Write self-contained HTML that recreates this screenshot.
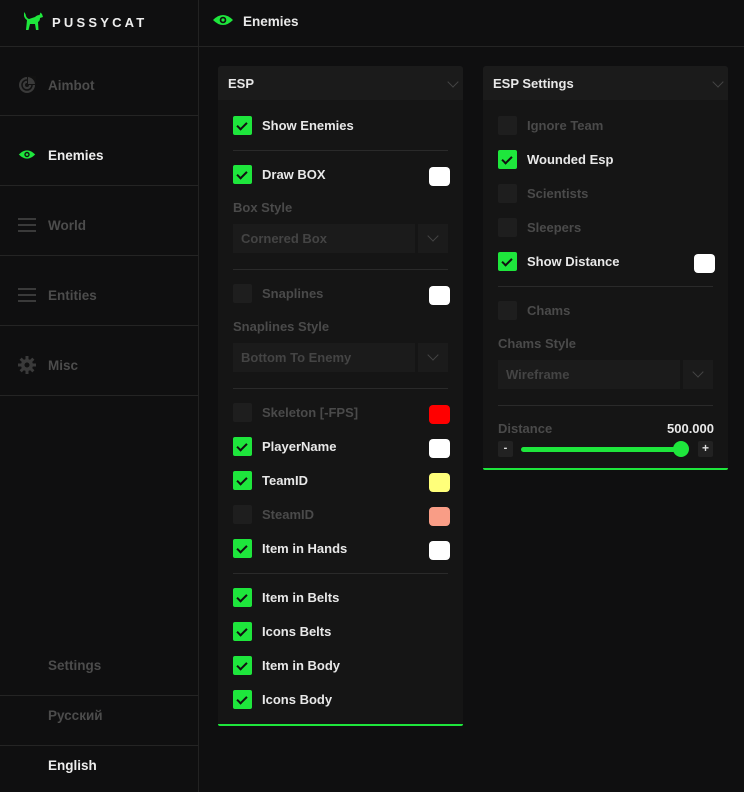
<!DOCTYPE html>
<html><head><meta charset="utf-8"><style>
*{margin:0;padding:0;box-sizing:border-box}
body{width:744px;height:792px;background:#0f0f10;font-family:"Liberation Sans","DejaVu Sans",sans-serif;font-weight:bold;font-size:13px;color:#e8e8e8;position:relative;overflow:hidden}
.a{position:absolute}
.sb{left:0;top:0;width:199px;height:792px;border-right:1px solid #222}
.hl{height:1px;background:#242424}
.nav{left:48px;font-size:13.5px;color:#4c4c4c}
.panel{background:#151515;border-radius:3px}
.gl{height:2px;background:#1ee63c;border-radius:0 0 3px 3px}
.ph{background:#1b1b1b;height:34px;border-radius:3px 3px 0 0}
.cb{width:19px;height:19px;border-radius:2px;background:#1ee63c}
.cb.off{background:#1e1e1e}
.cb:not(.off)::after{content:"";position:absolute;left:6px;top:4px;width:4px;height:8px;border:solid #111;border-width:0 2px 2px 0;transform:rotate(45deg)}
.lbl{font-size:13px;margin-top:1px}
.dis{color:#4a4a4a}
.sw{width:21px;height:19px;border-radius:4px}
.dv{height:1px;background:#2a2a2a}
.cmb{height:29px;background:#1b1b1b;color:#444;padding:7px 8px;font-size:13px}
.chev{width:8px;height:8px;border:solid #555;border-width:0 1.5px 1.5px 0;transform:rotate(45deg)}
</style></head><body>
<div class="a sb"></div>
<!-- logo -->
<svg class="a" style="left:22px;top:11px" width="22" height="20" viewBox="0 0 22 20"><path d="M2 1 L2 5 Q3 8 5 9 L4 19 H6.5 L8 13 H13 L14 19 H16.5 L16 11 Q18 10 18 7 L21 6 L20 3 L18.5 1.5 L17.5 4 Q15 4 13 6 L7 8 Q4 7 3.5 3 Z" fill="#1ee63c"/></svg>
<div class="a" style="left:52px;top:15px;font-size:13px;letter-spacing:3.2px;color:#eee">PUSSYCAT</div>
<div class="a hl" style="left:0;top:46px;width:744px"></div>
<!-- top bar eye -->
<svg class="a" style="left:212px;top:13px" width="22" height="14" viewBox="0 0 22 14"><path d="M1 7 Q11 -3 21 7 Q11 17 1 7Z" fill="#1ee63c"/><circle cx="11" cy="7" r="3.3" fill="#0f0f10"/><circle cx="11" cy="7" r="1.6" fill="#1ee63c"/></svg>
<div class="a" style="left:243px;top:14px;font-size:13.5px">Enemies</div>
<!-- nav -->
<svg class="a" style="left:18px;top:76px" width="18" height="18" viewBox="0 0 18 18"><circle cx="9" cy="9" r="8" fill="#3a3a3a"/><circle cx="9" cy="9" r="5" fill="none" stroke="#111" stroke-width="1.5"/><circle cx="9" cy="9" r="2" fill="#111"/><path d="M9 9 L9 0 L18 0 L18 9Z" fill="#111"/><path d="M10 1 A8 8 0 0 1 17 8 L10 8Z" fill="#3a3a3a"/></svg>
<div class="a nav" style="top:78px">Aimbot</div>
<div class="a hl" style="left:0;top:115px;width:198px"></div>
<svg class="a" style="left:18px;top:148px" width="18" height="13" viewBox="0 0 22 14"><path d="M1 7 Q11 -3 21 7 Q11 17 1 7Z" fill="#1ee63c"/><circle cx="11" cy="7" r="3.3" fill="#0f0f10"/><circle cx="11" cy="7" r="1.6" fill="#1ee63c"/></svg>
<div class="a nav" style="top:148px;color:#eee">Enemies</div>
<div class="a hl" style="left:0;top:185px;width:198px"></div>
<svg class="a" style="left:18px;top:218px" width="18" height="14"><rect y="0" width="18" height="2" fill="#3a3a3a"/><rect y="6" width="18" height="2" fill="#3a3a3a"/><rect y="12" width="18" height="2" fill="#3a3a3a"/></svg>
<div class="a nav" style="top:218px">World</div>
<div class="a hl" style="left:0;top:255px;width:198px"></div>
<svg class="a" style="left:18px;top:288px" width="18" height="14"><rect y="0" width="18" height="2" fill="#3a3a3a"/><rect y="6" width="18" height="2" fill="#3a3a3a"/><rect y="12" width="18" height="2" fill="#3a3a3a"/></svg>
<div class="a nav" style="top:288px">Entities</div>
<div class="a hl" style="left:0;top:325px;width:198px"></div>
<svg class="a" style="left:18px;top:356px" width="18" height="18" viewBox="0 0 18 18"><g fill="#3a3a3a"><circle cx="9" cy="9" r="6"/><rect x="7.5" y="0" width="3" height="18"/><rect x="0" y="7.5" width="18" height="3"/><rect x="7.5" y="0" width="3" height="18" transform="rotate(45 9 9)"/><rect x="7.5" y="0" width="3" height="18" transform="rotate(-45 9 9)"/></g><circle cx="9" cy="9" r="2.5" fill="#111"/></svg>
<div class="a nav" style="top:358px">Misc</div>
<div class="a hl" style="left:0;top:395px;width:198px"></div>
<div class="a nav" style="top:658px">Settings</div>
<div class="a hl" style="left:0;top:695px;width:198px"></div>
<div class="a nav" style="top:708px">Русский</div>
<div class="a hl" style="left:0;top:745px;width:198px"></div>
<div class="a nav" style="top:758px;color:#eee">English</div>

<!-- ESP panel -->
<div class="a panel" style="left:218px;top:66px;width:245px;height:660px"></div>
<div class="a gl" style="left:218px;top:724px;width:245px"></div>
<div class="a ph" style="left:218px;top:66px;width:245px"></div>
<div class="a" style="left:228px;top:76px">ESP</div>
<div class="a chev" style="left:449px;top:78px;border-color:#444"></div>

<div class="a cb" style="left:233px;top:116px"></div><div class="a lbl" style="left:262px;top:117px">Show Enemies</div>
<div class="a dv" style="left:233px;top:150px;width:215px"></div>
<div class="a cb" style="left:233px;top:165px"></div><div class="a lbl" style="left:262px;top:166px">Draw BOX</div><div class="a sw" style="left:429px;top:167px;background:#fff"></div>
<div class="a lbl dis" style="left:233px;top:199px">Box Style</div>
<div class="a cmb" style="left:233px;top:224px;width:182px">Cornered Box</div>
<div class="a cmb" style="left:418px;top:224px;width:30px"></div><div class="a chev" style="left:429px;top:232px;border-color:#444"></div>
<div class="a dv" style="left:233px;top:269px;width:215px"></div>
<div class="a cb off" style="left:233px;top:284px"></div><div class="a lbl dis" style="left:262px;top:285px">Snaplines</div><div class="a sw" style="left:429px;top:286px;background:#fff"></div>
<div class="a lbl dis" style="left:233px;top:318px">Snaplines Style</div>
<div class="a cmb" style="left:233px;top:343px;width:182px">Bottom To Enemy</div>
<div class="a cmb" style="left:418px;top:343px;width:30px"></div><div class="a chev" style="left:429px;top:351px;border-color:#444"></div>
<div class="a dv" style="left:233px;top:388px;width:215px"></div>
<div class="a cb off" style="left:233px;top:403px"></div><div class="a lbl dis" style="left:262px;top:404px">Skeleton [-FPS]</div><div class="a sw" style="left:429px;top:405px;background:#f00"></div>
<div class="a cb" style="left:233px;top:437px"></div><div class="a lbl" style="left:262px;top:438px">PlayerName</div><div class="a sw" style="left:429px;top:439px;background:#fff"></div>
<div class="a cb" style="left:233px;top:471px"></div><div class="a lbl" style="left:262px;top:472px">TeamID</div><div class="a sw" style="left:429px;top:473px;background:#ffff7a"></div>
<div class="a cb off" style="left:233px;top:505px"></div><div class="a lbl dis" style="left:262px;top:506px">SteamID</div><div class="a sw" style="left:429px;top:507px;background:#f99d86"></div>
<div class="a cb" style="left:233px;top:539px"></div><div class="a lbl" style="left:262px;top:540px">Item in Hands</div><div class="a sw" style="left:429px;top:541px;background:#fff"></div>
<div class="a dv" style="left:233px;top:573px;width:215px"></div>
<div class="a cb" style="left:233px;top:588px"></div><div class="a lbl" style="left:262px;top:589px">Item in Belts</div>
<div class="a cb" style="left:233px;top:622px"></div><div class="a lbl" style="left:262px;top:623px">Icons Belts</div>
<div class="a cb" style="left:233px;top:656px"></div><div class="a lbl" style="left:262px;top:657px">Item in Body</div>
<div class="a cb" style="left:233px;top:690px"></div><div class="a lbl" style="left:262px;top:691px">Icons Body</div>

<!-- ESP settings -->
<div class="a panel" style="left:483px;top:66px;width:245px;height:404px"></div>
<div class="a gl" style="left:483px;top:468px;width:245px"></div>
<div class="a ph" style="left:483px;top:66px;width:245px"></div>
<div class="a" style="left:493px;top:76px">ESP Settings</div>
<div class="a chev" style="left:714px;top:78px;border-color:#444"></div>
<div class="a cb off" style="left:498px;top:116px"></div><div class="a lbl dis" style="left:527px;top:117px">Ignore Team</div>
<div class="a cb" style="left:498px;top:150px"></div><div class="a lbl" style="left:527px;top:151px">Wounded Esp</div>
<div class="a cb off" style="left:498px;top:184px"></div><div class="a lbl dis" style="left:527px;top:185px">Scientists</div>
<div class="a cb off" style="left:498px;top:218px"></div><div class="a lbl dis" style="left:527px;top:219px">Sleepers</div>
<div class="a cb" style="left:498px;top:252px"></div><div class="a lbl" style="left:527px;top:253px">Show Distance</div><div class="a sw" style="left:694px;top:254px;background:#fff"></div>
<div class="a dv" style="left:498px;top:286px;width:215px"></div>
<div class="a cb off" style="left:498px;top:301px"></div><div class="a lbl dis" style="left:527px;top:302px">Chams</div>
<div class="a lbl dis" style="left:498px;top:335px">Chams Style</div>
<div class="a cmb" style="left:498px;top:360px;width:182px">Wireframe</div>
<div class="a cmb" style="left:683px;top:360px;width:30px"></div><div class="a chev" style="left:694px;top:368px;border-color:#444"></div>
<div class="a dv" style="left:498px;top:405px;width:215px"></div>
<div class="a lbl dis" style="left:498px;top:420px">Distance</div>
<div class="a lbl" style="left:667px;top:420px">500.000</div>
<div class="a" style="left:498px;top:441px;width:15px;height:16px;background:#222;border-radius:2px;color:#ddd;font-size:11px;text-align:center;line-height:15px">-</div>
<div class="a" style="left:521px;top:447px;width:155px;height:5px;background:#1ee63c;border-radius:3px"></div>
<div class="a" style="left:673px;top:441px;width:16px;height:16px;background:#1ee63c;border-radius:50%"></div>
<div class="a" style="left:698px;top:441px;width:15px;height:16px;background:#222;border-radius:2px;color:#ddd;font-size:12px;text-align:center;line-height:15px">+</div>
</body></html>
